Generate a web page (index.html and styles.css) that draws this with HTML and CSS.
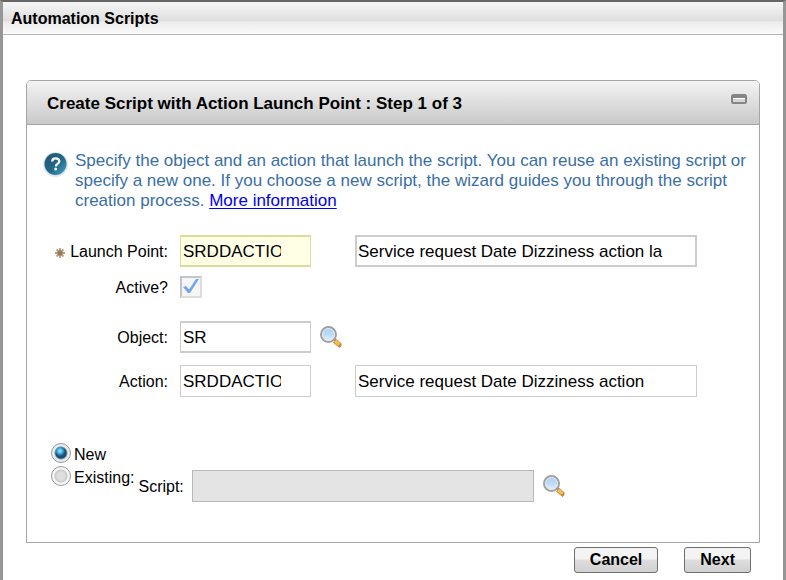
FILE: index.html
```html
<!DOCTYPE html>
<html lang="en">
<head>
<meta charset="utf-8">
<title>Automation Scripts</title>
<link rel="stylesheet" href="styles.css">
</head>
<body>
<svg class="defs" aria-hidden="true">
  <defs>
    <linearGradient id="lens" x1="0" y1="0" x2="0" y2="1">
      <stop offset="0" stop-color="#a9cdf2"/>
      <stop offset=".5" stop-color="#bfdaf5"/>
      <stop offset="1" stop-color="#eaf3fb"/>
    </linearGradient>
    <linearGradient id="ball" x1="0" y1="0" x2="1" y2="1">
      <stop offset="0" stop-color="#245371"/>
      <stop offset=".55" stop-color="#23688a"/>
      <stop offset="1" stop-color="#4aa5c4"/>
    </linearGradient>
    <symbol id="search" viewBox="0 0 24 24">
      <path d="M14 15l2-2 2 2-2 2z" fill="#8b8b8b"/>
      <path d="M14 17.500l3.500-3.500 5 4.500v2.500l-2 2z" fill="#c58a3c"/>
      <path d="M15 17l2.500-2.500 4 4-2.500 2.500z" fill="#f4bd4c"/>
      <circle cx="9.500" cy="9.500" r="7.500" fill="url(#lens)" stroke="#a0a0a0" stroke-width="2"/>
      <circle cx="9.500" cy="9.500" r="6" fill="none" stroke="#e4edf5" stroke-width="1"/>
    </symbol>
  </defs>
</svg>
<main class="dialog">
  <header class="titlebar"><h1>Automation Scripts</h1></header>
  <form class="content">
    <section class="panel">
      <header class="panel-header">
        <h2>Create Script with Action Launch Point : Step 1 of 3</h2>
        <button type="button" class="minimize" aria-label="Minimize">
          <svg width="16" height="10" viewBox="0 0 16 10"><rect x="1" y="1" width="14" height="8" rx="1.500" fill="#fff" stroke="#858585" stroke-width="2"/><path d="M1 1h14v3H1z" fill="#858585"/><path d="M2 5h12v3H2z" fill="#d6d6d6"/></svg>
        </button>
      </header>
      <div class="panel-body">
        <div class="intro">
          <svg class="help" width="26" height="28" viewBox="0 0 26 28" aria-hidden="true">
            <circle cx="12.500" cy="13.500" r="12.500" fill="#dfe7eb"/>
            <circle cx="12.500" cy="13" r="11" fill="url(#ball)"/>
            <path d="M9.200 10.500q0-3.200 3.500-3.200t3.600 3q0 1.700-1.900 2.800-1.600 1-1.600 2.400" fill="none" stroke="#f4f8fa" stroke-width="2.300"/>
            <circle cx="12.700" cy="18" r="1.500" fill="#f4f8fa"/>
          </svg>
          <p>Specify the object and an action that launch the script. You can reuse an existing script or specify a new one. If you choose a new script, the wizard guides you through the script creation process. <a href="#more">More information</a></p>
        </div>
        <div class="fields">
          <div class="row">
            <label for="launch"><svg class="required" width="12" height="12" viewBox="0 0 12 12" aria-hidden="true"><path d="M6 1v10M1 6h10M2.500 2.500l7 7M9.500 2.500l-7 7" stroke="#b79b78" stroke-width="1.800"/><circle cx="6" cy="6" r="2.500" fill="#94795a"/></svg>Launch Point:</label>
            <input class="box short key" id="launch" type="text" value="SRDDACTION">
            <input class="box" type="text" aria-label="Launch point description" value="Service request Date Dizziness action la">
          </div>
          <div class="row active-row">
            <label for="active">Active?</label>
            <input class="check" id="active" type="checkbox" checked>
          </div>
          <div class="row object-row">
            <label for="object">Object:</label>
            <input class="box short" id="object" type="text" value="SR">
            <button type="button" class="lookup" aria-label="Select object"><svg width="24" height="24"><use href="#search"/></svg></button>
          </div>
          <div class="row">
            <label for="action">Action:</label>
            <input class="box short thin" id="action" type="text" value="SRDDACTION">
            <input class="box thin" type="text" aria-label="Action description" value="Service request Date Dizziness action">
          </div>
        </div>
        <div class="source">
          <div class="choices">
            <label><input type="radio" name="source" checked>New</label>
            <label><input type="radio" name="source">Existing:</label>
          </div>
          <div class="script">
            <label for="script">Script:</label>
            <input class="box" id="script" type="text" disabled>
            <button type="button" class="lookup" aria-label="Select script"><svg width="24" height="24"><use href="#search"/></svg></button>
          </div>
        </div>
      </div>
    </section>
    <footer class="actions">
      <button type="button">Cancel</button>
      <button type="button">Next</button>
    </footer>
  </form>
</main>
</body>
</html>
```
FILE: styles.css
```css
* { box-sizing: border-box; }
body {
  margin: 0;
  background: #fff;
  color: #000;
  font: 16px/20px "Liberation Sans", Arial, sans-serif;
}
h1, h2, p { margin: 0; }
h1 { font-size: 16px; line-height: 20px; }
h2 { font-size: 17px; line-height: 20px; }
button, input { font: inherit; color: inherit; margin: 0; }
.defs { position: absolute; width: 0; height: 0; }
.dialog {
  min-height: 100vh;
  border: solid #969696;
  border-width: 2px 3px 0;
  border-top-color: #666;
}
.titlebar {
  padding: 7px 8px 5px;
  border-bottom: 1px solid #b5b5b5;
  background: linear-gradient(#f6f6f6, #e6e6e6 40%, #dedede 58%, #ececec 62%, #fafafa);
}
.content { padding: 45px 23px 0; }
.panel { border: 1px solid #a5a5a5; border-radius: 5px 5px 0 0; }
.panel-header {
  display: flex;
  justify-content: space-between;
  align-items: flex-start;
  padding: 13px 12px 10px 20px;
  border-bottom: 1px solid #a5a5a5;
  border-radius: 4px 4px 0 0;
  background: linear-gradient(#f3f3f3, #c9c9c9);
}
.minimize, .lookup { padding: 0; border: 0; background: none; }
.minimize svg, .lookup svg { display: block; }
.panel-body { padding: 26px 8px 40px 16px; }
.intro { display: flex; gap: 6px; color: #3a6ea5; font-size: 17px; }
.help { flex: none; }
.intro a { color: #0000f0; text-underline-offset: 2px; }
.fields { margin-top: 24px; }
.row {
  display: grid;
  grid-template-columns: 125px 131px minmax(0, 374px);
  column-gap: 12px;
  align-items: center;
}
.row > label { text-align: right; padding-top: 2px; }
.row > .box + .box { margin-left: 32px; }
.required { margin-right: 4px; vertical-align: -2px; }
.box {
  width: 342px;
  height: 32px;
  padding: 1px 2px 0 1px;
  border: 2px solid #ccc;
  border-radius: 0;
  background: #fff;
  font-size: 17px;
}
.box.short { width: 131px; padding: 1px 29px 0 2px; border-width: 2px 1px; }
.box.key { border-color: #dcdc9c; background: #ffffe6; }
.box.thin, .box.short.thin { border-width: 1px; padding-left: 2px; }
.box:disabled { background: #e4e4e4; border: 1px solid #b8b8b8; }
.active-row { margin-top: 9px; }
.object-row { margin: 23px 0 12px; }
.row .lookup { justify-self: start; margin-left: -4px; }
.check {
  appearance: none;
  width: 22px;
  height: 22px;
  border: 2px solid #c4c4c8;
  border-right-color: #ddd;
  border-bottom-color: #ddd;
  background: #f5f5f5;
}
.check:checked {
  background: #f5f5f5 url("data:image/svg+xml,%3Csvg xmlns='http://www.w3.org/2000/svg' viewBox='0 0 18 18'%3E%3Cpath d='M1 9l3-1 3 3.500L14 1h3L8 15H6z' fill='%2370a7ef'/%3E%3C/svg%3E") center / 18px no-repeat;
}
.source { display: flex; gap: 4px; margin-top: 45px; }
.choices { padding-left: 8px; }
.choices label { display: flex; align-items: center; gap: 3px; height: 23px; padding-top: 3px; }
.choices input {
  appearance: none;
  width: 20px;
  height: 20px;
  margin-top: -5px;
  border: 1px solid #999;
  border-radius: 50%;
  background: radial-gradient(circle, #dedede 4px, #c8c8c8 6px, #f5f5f5 7px);
}
.choices input:checked {
  background: radial-gradient(circle at 8px 7px, #b6e9ff 0, #32a4dc 3px, transparent 5px), radial-gradient(circle, #15547e 4px, #16476b 5px, #ececec 7px);
}
.script { display: flex; align-items: center; gap: 8px; margin-top: 28px; }
.script label { padding-top: 2px; }
.actions { display: flex; justify-content: flex-end; gap: 26px; padding: 4px 9px 6px; }
.actions button {
  padding: 2px 15px;
  border: 1px solid #707070;
  border-radius: 3px;
  background: linear-gradient(#f3f3f3 0 45%, #dedede 50%, #d0d0d0);
  font-weight: bold;
}
```
